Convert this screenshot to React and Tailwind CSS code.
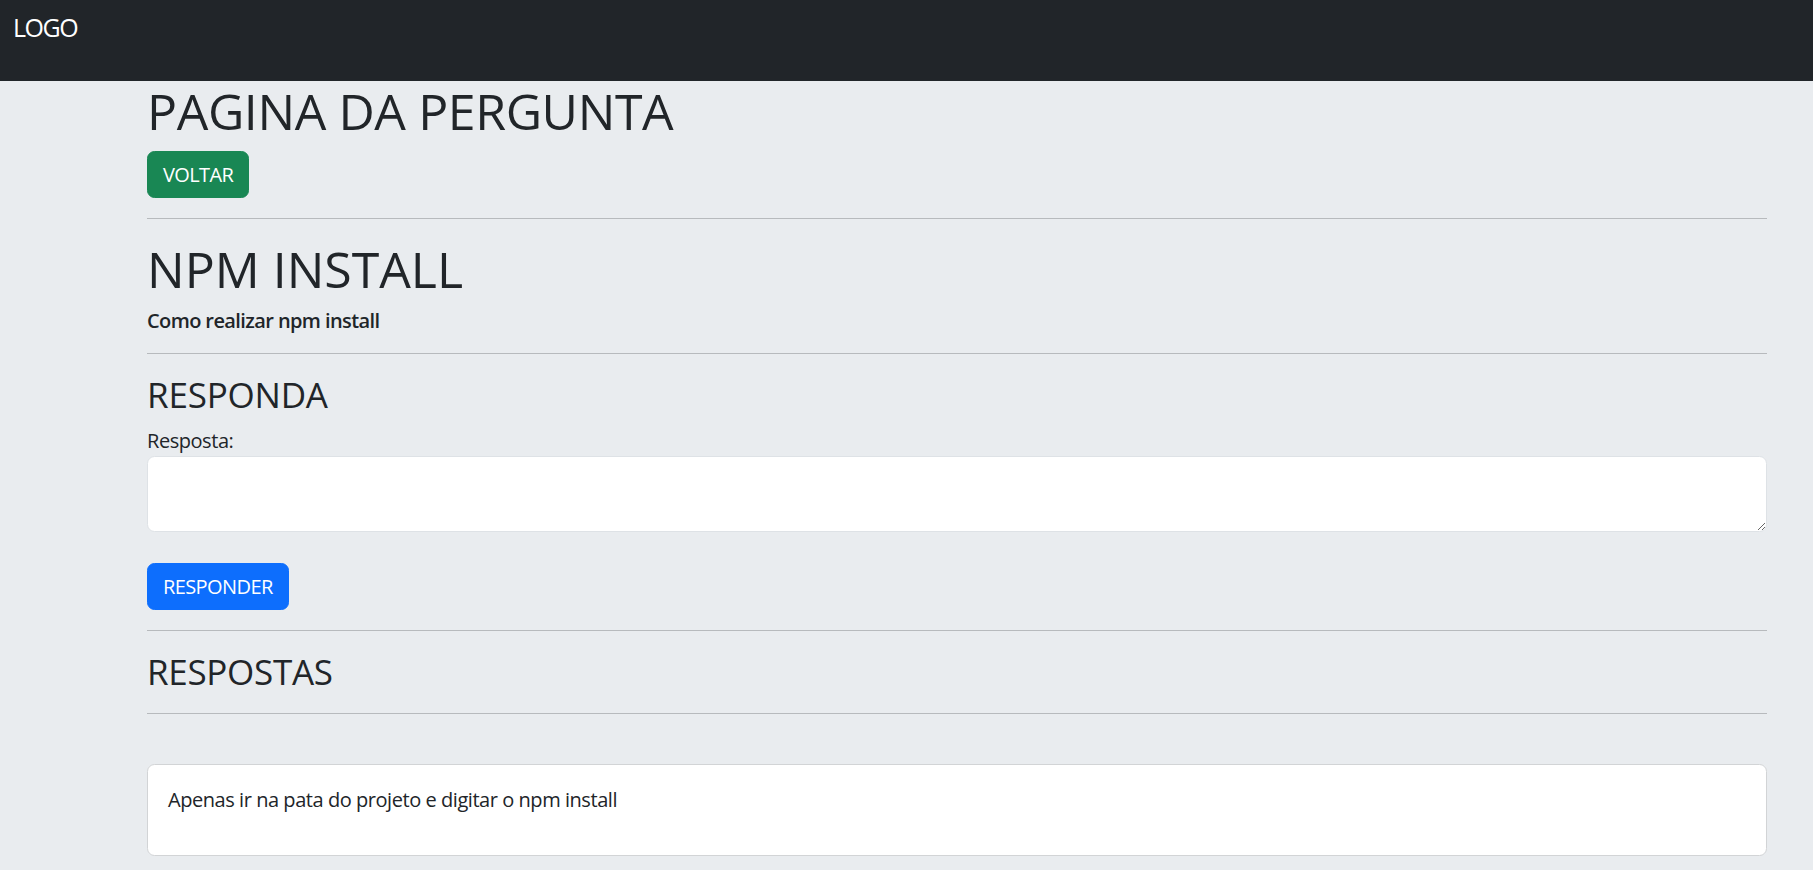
import React from 'react';

const App = () => {
  return (
    <div className="min-h-screen bg-[#e9ecef] text-[#212529] text-[20px] leading-[1.5] tracking-[-0.45px] font-['Open_Sans','Noto_Sans',sans-serif]">
      <nav className="h-[81px] bg-[#212529] pl-[13px] pt-[9px]">
        <span className="text-[25px] leading-[37px] tracking-[-1.5px] text-white">LOGO</span>
      </nav>

      <main className="ml-[147px] w-[1620px]">
        <h1 className="text-[50px] leading-[60px] tracking-[-0.4px] mb-[10px]">PAGINA DA PERGUNTA</h1>
        <div className="flex">
          <button className="bg-[#198754] border border-[#198754] text-white text-[20px] leading-[30px] tracking-[-0.6px] px-[15px] py-[7.5px] rounded-[7.5px]">
            VOLTAR
          </button>
        </div>
        <hr className="my-[20px] border-t border-[#b7babd]" />

        <h1 className="text-[50px] leading-[60px] tracking-normal mb-[10px]">NPM INSTALL</h1>
        <h6 className="text-[20px] leading-[24px] tracking-[-0.6px] font-semibold">Como realizar npm install</h6>
        <hr className="my-[20px] border-t border-[#b7babd]" />

        <h3 className="text-[35px] leading-[42px] tracking-[-0.2px] mb-[10px]">RESPONDA</h3>
        <form>
          <label className="block leading-[30px]">Resposta:</label>
          <textarea className="block w-full h-[76px] bg-white border border-[#dee2e6] rounded-[7.5px] px-[15px] py-[7.5px] outline-none" />
          <div className="h-[31px]" />
          <div className="flex">
            <button type="button" className="bg-[#0d6efd] border border-[#0d6efd] text-white text-[20px] leading-[30px] tracking-[-0.6px] px-[15px] py-[7.5px] rounded-[7.5px]">
              RESPONDER
            </button>
          </div>
        </form>
        <hr className="my-[20px] border-t border-[#b7babd]" />

        <h3 className="text-[35px] leading-[42px] tracking-[-0.3px] mb-[10px]">RESPOSTAS</h3>
        <hr className="mt-[20px] mb-[50px] border-t border-[#b7babd]" />

        <div className="bg-white border border-[#d2d4d6] rounded-[7.5px] p-[20px]">
          <p className="mb-[20px]">Apenas ir na pata do projeto e digitar o npm install</p>
        </div>
      </main>
    </div>
  );
};

export default App;
